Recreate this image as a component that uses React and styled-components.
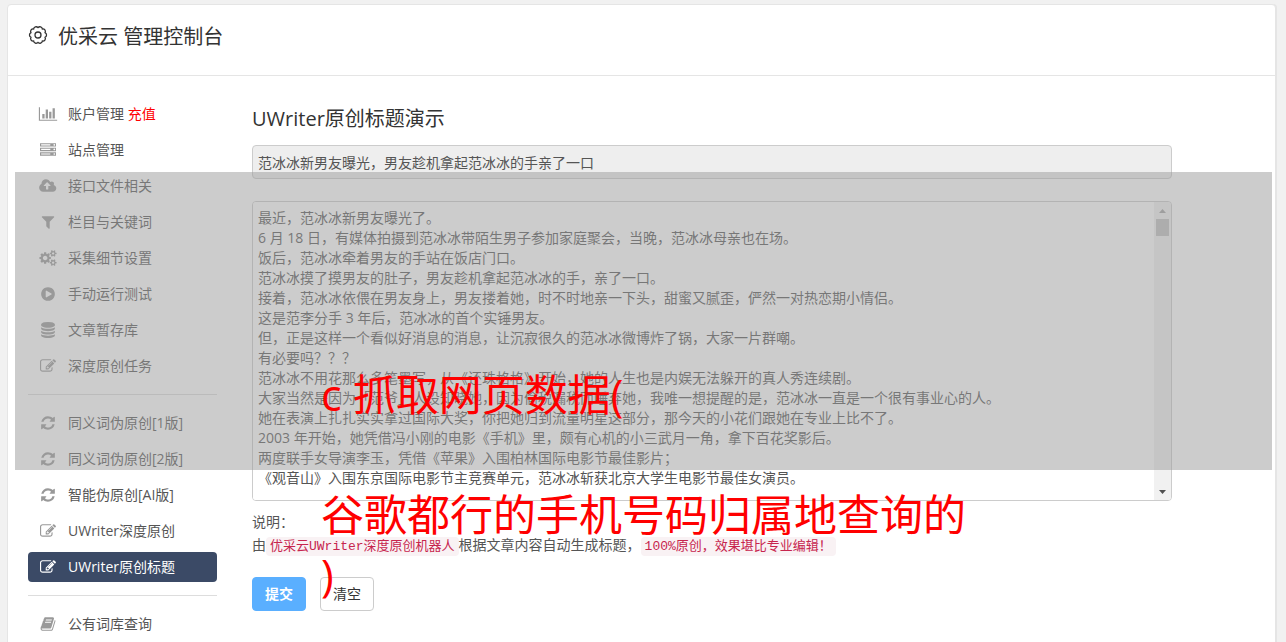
import { useState } from "react";
import styled, { createGlobalStyle } from "styled-components";

const GlobalStyle = createGlobalStyle`
  * {
    box-sizing: border-box;
  }
  body {
    margin: 0;
    background-color: #f1f1f1;
    color: #555;
    font-family: "Open Sans", "Noto Sans CJK SC", sans-serif;
    font-size: 14px;
    line-height: 20px;
  }
  #root {
    height: 100vh;
    overflow: hidden;
  }
  button,
  input,
  textarea {
    font: inherit;
  }
`;

const Page = styled.div`
  position: relative;
  min-height: 100%;
  padding: 4px 10px 0 7px;
`;
const Panel = styled.div`
  min-height: 100vh;
  background-color: #fff;
  border: 1px solid #e5e5e5;
  border-radius: 4px;
  box-shadow: 1px 0 0 #e5e5e5;
`;
const Header = styled.header`
  display: flex;
  align-items: center;
  gap: 10px;
  height: 71px;
  padding: 0 20px 11px;
  border-bottom: 1px solid #e5e5e5;
  color: #333;
`;
const Brand = styled.h1`
  margin: 0;
  padding-top: 4px;
  font-size: 20px;
  font-weight: 400;
  line-height: 28px;
`;
const Body = styled.div`
  display: flex;
  gap: 35px;
  padding: 23px 103px 0 20px;
`;
const Sidebar = styled.nav`
  flex: none;
  width: 189px;
`;
const Menu = styled.ul`
  display: flex;
  flex-direction: column;
  gap: 6px;
  margin: 0;
  padding: 0;
  list-style: none;
`;
const MenuLink = styled.a`
  display: flex;
  align-items: center;
  gap: 10px;
  height: 30px;
  padding-left: 10px;
  border-radius: 4px;
  background-color: ${(props) => (props.$active ? "#3b4a66" : "transparent")};
  color: ${(props) => (props.$active ? "#fff" : "#555")};
  text-decoration: none;
  white-space: pre;

  svg {
    color: ${(props) => (props.$active ? "#fff" : "#999")};
  }
`;
const Recharge = styled.span`
  color: #f00;
`;
const Divider = styled.hr`
  height: 1px;
  margin: 13px 0;
  border: 0;
  background-color: #ddd;
`;
const IconBox = styled.svg`
  flex: none;
  width: 20px;
  height: 16px;
  fill: currentColor;
`;
const GearIcon = styled.svg`
  flex: none;
  width: 20px;
  height: 20px;
  fill: none;
  stroke: currentColor;
`;
const Main = styled.form`
  flex: 1;
  min-width: 0;
`;
const Title = styled.h2`
  margin: 6px 0 12px;
  color: #333;
  font-size: 20px;
  font-weight: 400;
  line-height: 28px;
`;
const TitleInput = styled.input`
  display: block;
  width: 100%;
  height: 34px;
  padding: 0 5px;
  border: 1px solid #ccc;
  border-radius: 4px;
  background-color: #eee;
  color: #555;
`;
const ArticleBox = styled.div`
  display: flex;
  height: 300px;
  margin: 22px 0 9px;
  border: 1px solid #ccc;
  border-radius: 4px;
  overflow: hidden;
`;
const Article = styled.textarea`
  flex: 1;
  min-width: 0;
  padding: 6px 5px;
  border: 0;
  background-color: #fff;
  color: #555;
  line-height: 20px;
  resize: none;
  overflow: hidden;
`;
const ScrollBar = styled.div`
  display: flex;
  flex-direction: column;
  align-items: center;
  width: 17px;
  background-color: #f1f1f1;
`;
const ScrollButton = styled.button`
  display: flex;
  align-items: center;
  justify-content: center;
  width: 17px;
  height: 17px;
  padding: 0;
  border: 0;
  background-color: transparent;
  color: ${(props) => (props.disabled ? "#a3a3a3" : "#505050")};
`;
const ScrollThumb = styled.div`
  width: 13px;
  height: 17px;
  margin-bottom: auto;
  background-color: #c1c1c1;
`;
const Note = styled.p`
  margin: 0;
  line-height: 23px;
`;
const Code = styled.code`
  padding: 2px 4px;
  border-radius: 4px;
  background-color: #f9f2f4;
  color: #c7254e;
  font-family: "Liberation Mono", "Noto Sans CJK SC", monospace;
  font-size: 13px;
  line-height: 16px;
`;
const Actions = styled.div`
  display: flex;
  gap: 14px;
  margin-top: 21px;
`;
const Button = styled.button`
  width: 54px;
  height: 34px;
  padding: 0;
  border: 1px solid ${(props) => (props.$primary ? "#5aafff" : "#ccc")};
  border-radius: 4px;
  background-color: ${(props) => (props.$primary ? "#5aafff" : "#fff")};
  color: ${(props) => (props.$primary ? "#fff" : "#333")};
  font-weight: ${(props) => (props.$primary ? 700 : 400)};
  cursor: pointer;
`;
const Shade = styled.div`
  position: absolute;
  top: 172px;
  left: 15px;
  right: 14px;
  height: 298px;
  background-color: rgba(153, 153, 153, 0.5);
  pointer-events: none;
`;
const Caption = styled.div`
  position: absolute;
  top: 365px;
  left: 321px;
  color: #f00;
  font-size: 43px;
  line-height: 60px;
  white-space: pre;
  pointer-events: none;
`;

const icons = {
  chart: {
    box: "0 0 2048 1792",
    d: "M640 896v512h-256v-512h256zm384-512v1024h-256v-1024h256zm1024 1152v128h-2048v-1536h128v1408h1920zm-640-896v768h-256v-768h256zm384-384v1152h-256v-1152h256z",
  },
  server: {
    box: "0 0 1792 1792",
    d: "M128 1408h1024v-128h-1024v128zm0-512h1024v-128h-1024v128zm1568 448q0-40-28-68t-68-28-68 28-28 68 28 68 68 28 68-28 28-68zm-1568-960h1024v-128h-1024v128zm1568 448q0-40-28-68t-68-28-68 28-28 68 28 68 68 28 68-28 28-68zm0-512q0-40-28-68t-68-28-68 28-28 68 28 68 68 28 68-28 28-68zm96 832v384h-1792v-384h1792zm0-512v384h-1792v-384h1792zm0-512v384h-1792v-384h1792z",
  },
  cloud: {
    box: "0 0 1856 1792",
    d: "M1216 864q0-14-9-23l-352-352q-9-9-23-9t-23 9l-351 351q-10 12-10 24 0 14 9 23t23 9h224v352q0 13 9.5 22.5t22.5 9.5h192q13 0 22.5-9.5t9.5-22.5v-352h224q13 0 22.5-9.5t9.5-22.5zm640 288q0 159-112.5 271.5t-271.5 112.5h-1088q-185 0-316.5-131.5t-131.5-316.5q0-130 70-240t188-165q-2-30-2-43 0-212 150-362t362-150q156 0 285.5 87t188.5 231q71-62 166-62 106 0 181 75t75 181q0 76-41 138 130 31 213.5 135.5t83.5 238.5z",
  },
  filter: {
    box: "0 0 1792 1792",
    d: "M1595 295q17 41-14 70l-493 493v742q0 42-39 59-13 5-25 5-27 0-45-19l-256-256q-19-19-19-45v-486l-493-493q-31-29-14-70 17-39 59-39h1280q42 0 59 39z",
  },
  cogs: {
    box: "0 0 1920 1792",
    d: "M896 896q0-106-75-181t-181-75-181 75-75 181 75 181 181 75 181-75 75-181zm768 512q0-52-38-90t-90-38-90 38-38 90q0 53 37.5 90.5t90.5 37.5 90.5-37.5 37.5-90.5zm0-1024q0-52-38-90t-90-38-90 38-38 90q0 53 37.5 90.5t90.5 37.5 90.5-37.5 37.5-90.5zm-384 421v185q0 10-7 19.5t-16 10.5l-155 24q-11 35-32 76 34 48 90 115 7 11 7 20 0 12-7 19-23 30-82.5 89.5t-78.5 59.5q-11 0-21-7l-115-90q-37 19-77 31-11 108-23 155-7 24-30 24h-186q-11 0-20-7.5t-10-17.5l-23-153q-34-10-75-31l-118 89q-7 7-20 7-11 0-21-8-144-133-144-160 0-9 7-19 10-14 41-53t47-61q-23-44-35-82l-152-24q-10-1-17-9.5t-7-19.5v-185q0-10 7-19.5t16-10.5l155-24q11-35 32-76-34-48-90-115-7-11-7-20 0-12 7-20 22-30 82-89t79-59q11 0 21 7l115 90q34-18 77-32 11-108 23-154 7-24 30-24h186q11 0 20 7.5t10 17.5l23 153q34 10 75 31l118-89q8-7 20-7 11 0 21 8 144 133 144 160 0 8-7 19-12 16-42 54t-45 60q23 48 34 82l152 23q10 2 17 10.5t7 19.5zm640 533v140q0 16-149 31-12 27-30 52 51 113 51 138 0 4-4 7-122 71-124 71-8 0-46-47t-52-68q-20 2-30 2t-30-2q-14 21-52 68t-46 47q-2 0-124-71-4-3-4-7 0-25 51-138-18-25-30-52-149-15-149-31v-140q0-16 149-31 13-29 30-52-51-113-51-138 0-4 4-7 4-2 35-20t59-34 30-16q8 0 46 46.5t52 67.5q20-2 30-2t30 2q51-71 92-112l6-2q4 0 124 70 4 3 4 7 0 25-51 138 17 23 30 52 149 15 149 31zm0-1024v140q0 16-149 31-12 27-30 52 51 113 51 138 0 4-4 7-122 71-124 71-8 0-46-47t-52-68q-20 2-30 2t-30-2q-14 21-52 68t-46 47q-2 0-124-71-4-3-4-7 0-25 51-138-18-25-30-52-149-15-149-31v-140q0-16 149-31 13-29 30-52-51-113-51-138 0-4 4-7 4-2 35-20t59-34 30-16q8 0 46 46.5t52 67.5q20-2 30-2t30 2q51-71 92-112l6-2q4 0 124 70 4 3 4 7 0 25-51 138 17 23 30 52 149 15 149 31z",
  },
  play: {
    box: "0 0 1792 1792",
    d: "M896 128q209 0 385.5 103t279.5 279.5 103 385.5-103 385.5-279.5 279.5-385.5 103-385.5-103-279.5-279.5-103-385.5 103-385.5 279.5-279.5 385.5-103zm384 823q32-18 32-55t-32-55l-544-320q-31-19-64-1-32 19-32 56v640q0 37 32 56 16 8 32 8 17 0 32-9z",
  },
  database: {
    box: "0 0 1792 1792",
    d: "M896 768q237 0 443-43t325-127v170q0 69-103 128t-280 93.5-385 34.5-385-34.5-280-93.5-103-128v-170q119 84 325 127t443 43zm0 768q237 0 443-43t325-127v170q0 69-103 128t-280 93.5-385 34.5-385-34.5-280-93.5-103-128v-170q119 84 325 127t443 43zm0-384q237 0 443-43t325-127v170q0 69-103 128t-280 93.5-385 34.5-385-34.5-280-93.5-103-128v-170q119 84 325 127t443 43zm0-1152q208 0 385 34.5t280 93.5 103 128v128q0 69-103 128t-280 93.5-385 34.5-385-34.5-280-93.5-103-128v-128q0-69 103-128t280-93.5 385-34.5z",
  },
  edit: {
    box: "0 0 1792 1792",
    d: "M888 1184l116-116-152-152-116 116v56h96v96h56zm440-720q-16-16-33 1l-350 350q-17 17-1 33t33-1l350-350q17-17 1-33zm80 594v190q0 119-84.5 203.5t-203.5 84.5h-832q-119 0-203.5-84.5t-84.5-203.5v-832q0-119 84.5-203.5t203.5-84.5h832q63 0 117 25 15 7 18 23 3 17-9 29l-49 49q-14 14-32 8-23-6-45-6h-832q-66 0-113 47t-47 113v832q0 66 47 113t113 47h832q66 0 113-47t47-113v-126q0-13 9-22l64-64q15-15 35-7t20 29zm-96-738l288 288-672 672h-288v-288zm444 132l-92 92-288-288 92-92q28-28 68-28t68 28l152 152q28 28 28 68t-28 68z",
  },
  refresh: {
    box: "0 0 1792 1792",
    d: "M1639 1056q0 5-1 7-64 268-268 434.5t-478 166.5q-146 0-282.5-55t-243.5-157l-129 129q-19 19-45 19t-45-19-19-45v-448q0-26 19-45t45-19h448q26 0 45 19t19 45-19 45l-137 137q71 66 161 102t187 36q134 0 250-65t186-179q11-17 53-117 8-23 30-23h192q13 0 22.5 9.5t9.5 22.5zm25-800v448q0 26-19 45t-45 19h-448q-26 0-45-19t-19-45 19-45l138-138q-148-137-349-137-134 0-250 65t-186 179q-11 17-53 117-8 23-30 23h-199q-13 0-22.5-9.5t-9.5-22.5v-7q65-268 270-434.5t480-166.5q146 0 284 55.5t245 156.5l130-129q19-19 45-19t45 19 19 45z",
  },
  book: {
    box: "0 0 1792 1792",
    d: "M1703 478q40 57 18 129l-275 906q-19 64-76.5 107.5t-122.5 43.5h-923q-77 0-148.5-53.5t-99.5-131.5q-24-67-2-127 0-4 3-27t4-37q1-8-3-21.5t-3-19.5q2-11 8-21t16.5-23.5 16.5-23.5q23-38 45-91.5t30-91.5q3-10 .5-30t-.5-28q3-11 17-28t17-23q21-36 42-92t25-90q1-9-2.5-32t.5-28q4-13 22-30.5t22-22.5q19-26 42.5-84.5t27.5-96.5q1-8-3-25.5t-2-26.5q2-8 9-18t18-23 17-21q8-12 16.5-30.5t15-35 16-36 19.5-32 26.5-23.5 36-11.5 47.5 5.5l-1 3q38-9 51-9h761q74 0 114 56t18 130l-274 906q-36 119-71.5 153.5t-128.5 34.5h-869q-27 0-38 15-11 16-1 43 24 70 144 70h923q29 0 56-15.5t35-41.5l300-987q7-22 5-57 38 15 59 43zm-1064 2q-4 13 2 22.5t20 9.5h608q13 0 25.5-9.5t16.5-22.5l21-64q4-13-2-22.5t-20-9.5h-608q-13 0-25.5 9.5t-16.5 22.5zm-83 256q-4 13 2 22.5t20 9.5h608q13 0 25.5-9.5t16.5-22.5l21-64q4-13-2-22.5t-20-9.5h-608q-13 0-25.5 9.5t-16.5 22.5z",
  },
};

const menuGroups = [
  [
    { icon: "chart", label: "账户管理", extra: "充值" },
    { icon: "server", label: "站点管理" },
    { icon: "cloud", label: "接口文件相关" },
    { icon: "filter", label: "栏目与关键词" },
    { icon: "cogs", label: "采集细节设置" },
    { icon: "play", label: "手动运行测试" },
    { icon: "database", label: "文章暂存库" },
    { icon: "edit", label: "深度原创任务" },
  ],
  [
    { icon: "refresh", label: "同义词伪原创[1版]" },
    { icon: "refresh", label: "同义词伪原创[2版]" },
    { icon: "refresh", label: "智能伪原创[AI版]" },
    { icon: "edit", label: "UWriter深度原创" },
    { icon: "edit", label: "UWriter原创标题", active: true },
  ],
  [{ icon: "book", label: "公有词库查询" }],
];

const articleText = `最近，范冰冰新男友曝光了。
6 月 18 日，有媒体拍摄到范冰冰带陌生男子参加家庭聚会，当晚，范冰冰母亲也在场。
饭后，范冰冰牵着男友的手站在饭店门口。
范冰冰摸了摸男友的肚子，男友趁机拿起范冰冰的手，亲了一口。
接着，范冰冰依偎在男友身上，男友搂着她，时不时地亲一下头，甜蜜又腻歪，俨然一对热恋期小情侣。
这是范李分手 3 年后，范冰冰的首个实锤男友。
但，正是这样一个看似好消息的消息，让沉寂很久的范冰冰微博炸了锅，大家一片群嘲。
有必要吗？？？
范冰冰不用花那么多笔墨写，从《还珠格格》开始，她的人生也是内娱无法躲开的真人秀连续剧。
大家当然是因为「范爷」人设知晓她，因为偷税漏税而唾弃她，我唯一想提醒的是，范冰冰一直是一个很有事业心的人。
她在表演上扎扎实实拿过国际大奖，你把她归到流量明星这部分，那今天的小花们跟她在专业上比不了。
2003 年开始，她凭借冯小刚的电影《手机》里，颇有心机的小三武月一角，拿下百花奖影后。
两度联手女导演李玉，凭借《苹果》入围柏林国际电影节最佳影片；
《观音山》入围东京国际电影节主竞赛单元，范冰冰斩获北京大学生电影节最佳女演员。`;

const Icon = ({ name }) => (
  <IconBox viewBox={icons[name].box} aria-hidden="true">
    <path d={icons[name].d} />
  </IconBox>
);

const App = () => {
  const [article, setArticle] = useState(articleText);

  return (
    <>
      <GlobalStyle />
      <Page>
        <Panel>
          <Header>
            <GearIcon viewBox="0 0 20 20" aria-hidden="true">
              <path
                strokeWidth="1.3"
                d="M17.04 12.29A2.5 2.5 0 0 1 14.35 15.99A2.5 2.5 0 0 1 10 17.4A2.5 2.5 0 0 1 5.65 15.99A2.5 2.5 0 0 1 2.96 12.29A2.5 2.5 0 0 1 2.96 7.71A2.5 2.5 0 0 1 5.65 4.01A2.5 2.5 0 0 1 10 2.6A2.5 2.5 0 0 1 14.35 4.01A2.5 2.5 0 0 1 17.04 7.71A2.5 2.5 0 0 1 17.04 12.29Z"
              />
              <circle cx="10" cy="10" r="3" strokeWidth="1.3" />
            </GearIcon>
            <Brand>优采云 管理控制台</Brand>
          </Header>
          <Body>
            <Sidebar>
              {menuGroups.map((group, index) => (
                <div key={index}>
                  {index > 0 && <Divider />}
                  <Menu>
                    {group.map((item) => (
                      <li key={item.label}>
                        <MenuLink href="#" $active={item.active}>
                          <Icon name={item.icon} />
                          <span>
                            {item.label}
                            {item.extra && <Recharge> {item.extra}</Recharge>}
                          </span>
                        </MenuLink>
                      </li>
                    ))}
                  </Menu>
                </div>
              ))}
            </Sidebar>
            <Main onSubmit={(e) => e.preventDefault()}>
              <Title>UWriter原创标题演示</Title>
              <TitleInput
                aria-label="原创标题"
                readOnly
                value="范冰冰新男友曝光，男友趁机拿起范冰冰的手亲了一口"
              />
              <ArticleBox>
                <Article
                  aria-label="文章内容"
                  spellCheck={false}
                  value={article}
                  onChange={(e) => setArticle(e.target.value)}
                />
                <ScrollBar>
                  <ScrollButton type="button" aria-label="向上滚动" disabled>
                    <svg width="7" height="4" fill="currentColor">
                      <path d="M0 4L3.5 0L7 4Z" />
                    </svg>
                  </ScrollButton>
                  <ScrollThumb />
                  <ScrollButton type="button" aria-label="向下滚动">
                    <svg width="7" height="4" fill="currentColor">
                      <path d="M0 0L3.5 4L7 0Z" />
                    </svg>
                  </ScrollButton>
                </ScrollBar>
              </ArticleBox>
              <Note>说明：</Note>
              <Note>
                由<Code>优采云UWriter深度原创机器人</Code>根据文章内容自动生成标题，
                <Code>100%原创，效果堪比专业编辑！</Code>
              </Note>
              <Actions>
                <Button type="submit" $primary>
                  提交
                </Button>
                <Button type="button" onClick={() => setArticle("")}>
                  清空
                </Button>
              </Actions>
            </Main>
          </Body>
        </Panel>
        <Shade />
        <Caption>{"c 抓取网页数据(\n\n谷歌都行的手机号码归属地查询的\n)"}</Caption>
      </Page>
    </>
  );
};

export default App;
